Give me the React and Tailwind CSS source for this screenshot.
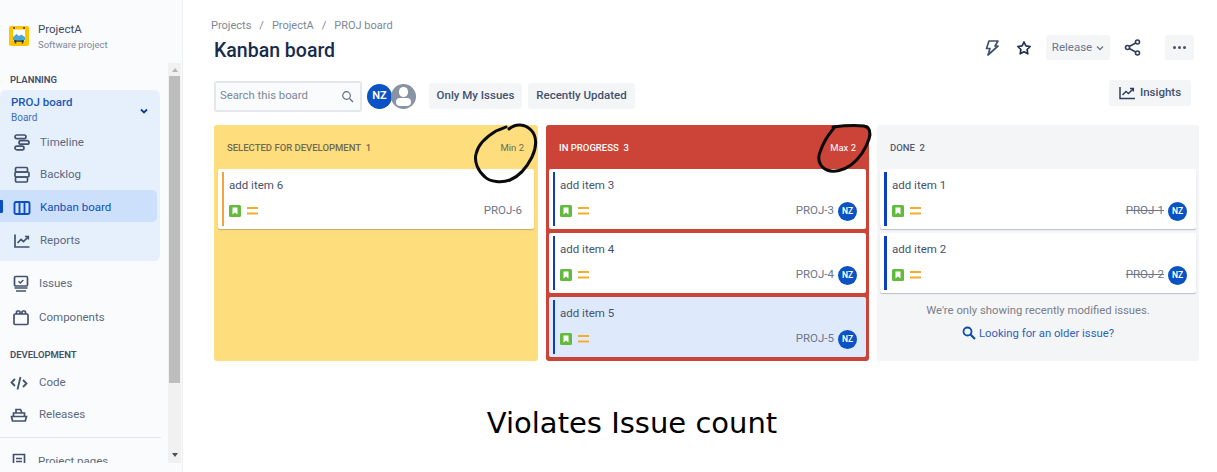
import React from "react";

const font = { fontFamily: 'Roboto, sans-serif' };

function NavIcon({ name, className = "text-[#42526e]" }) {
  const p = { width: 18, height: 18, viewBox: "0 0 18 18", fill: "none", stroke: "currentColor", strokeWidth: 1.7, className };
  if (name === "timeline") return (
    <svg {...p}><rect x="2" y="1" width="11" height="3.6" rx="1.8" /><rect x="6" y="6.6" width="10" height="3.6" rx="1.8" /><rect x="2" y="12.2" width="9" height="3.6" rx="1.8" /></svg>
  );
  if (name === "backlog") return (
    <svg {...p}><rect x="2.5" y="1.5" width="12" height="4.5" rx="1.2" /><rect x="2" y="6" width="14" height="5" rx="1.2" /><rect x="2.5" y="11" width="12" height="5" rx="1.2" /></svg>
  );
  if (name === "kanban") return (
    <svg {...p} strokeWidth={1.9}><rect x="1.5" y="3" width="15" height="12" rx="1.5" /><path d="M6.5 3v12M11.5 3v12" /></svg>
  );
  if (name === "reports") return (
    <svg {...p}><path d="M2 2.5V15h14.5" /><path d="M4.5 11l3.5-3.5 2.5 2L15 5" /><path d="M12 4.5h3.3v3" /></svg>
  );
  if (name === "issues") return (
    <svg {...p}><rect x="2.5" y="1.5" width="13" height="9.5" rx="1.2" /><path d="M6.5 6.2l1.8 1.7 3-3" strokeWidth="1.4" /><path d="M2.5 13h13M4 16h10" /></svg>
  );
  if (name === "components") return (
    <svg {...p}><rect x="2" y="5" width="14" height="10.5" rx="1.2" /><path d="M4.5 5V3a1 1 0 0 1 1-1h1.5a1 1 0 0 1 1 1v2M10 5V3a1 1 0 0 1 1-1h1.5a1 1 0 0 1 1 1v2" /></svg>
  );
  if (name === "code") return (
    <svg {...p} strokeWidth={1.8}><path d="M5 5L1.5 8.5 5 12M13 6l3.5 3.5L13 13M10.5 3l-3 12.5" /></svg>
  );
  if (name === "releases") return (
    <svg {...p}><path d="M1.5 10.5h15l-1.2 4.5H2.5z" /><path d="M3.5 10.5V7h11v3.5M6 7V3.5h4.5L12 7" /></svg>
  );
  return (
    <svg {...p}><path d="M3.5 1.5h11v15h-11z" /><path d="M6 5.5h6M6 8.5h6M6 11.5h3.5" /></svg>
  );
}

function NavRow({ icon, label, h = "h-8", pl = "pl-[13px]", gap = "gap-[9px]", active }) {
  return (
    <div className={`${h} ${pl} ${gap} flex items-center text-[11.5px] ${active ? "text-[#0b4fc0]" : "text-[#5c6a80]"}`}>
      <NavIcon name={icon} className={active ? "text-[#0b4fc0]" : "text-[#42526e]"} />
      <span>{label}</span>
    </div>
  );
}

function Sidebar() {
  return (
    <aside className="w-[183px] h-[472px] shrink-0 bg-[#fafbfd] border-r border-[#eceef1] flex flex-col" style={font}>
      <div className="h-[63px] shrink-0 pt-[21px] pl-[9px] flex gap-[9px]">
        <svg width="20" height="20" viewBox="0 0 20 20" className="mt-[5px]">
          <rect width="20" height="20" rx="2" fill="#ffc400" />
          <rect x="4" y="3.5" width="12" height="11" fill="#fff" />
          <path d="M4 11l3.5-3 2.5 2 2-1.5 4 2.5v3H4z" fill="#4aa8d8" />
          <path d="M5 15h10M6.5 14v3.5M13.5 14v3.5" stroke="#253858" strokeWidth="1.5" />
          <path d="M5 1v2M15 1v2" stroke="#253858" strokeWidth="1.4" />
        </svg>
        <div className="flex flex-col">
          <span className="text-[11.5px] leading-[17px] text-[#3a4a63]">ProjectA</span>
          <span className="text-[9.5px] leading-[14px] text-[#7a869a]">Software project</span>
        </div>
      </div>
      <div className="flex flex-1 min-h-0 pb-[9px]">
        <div className="w-[168px] shrink-0 overflow-hidden">
          <div className="pl-[10px] mt-[10px] h-[14px] leading-[14px] text-[9.5px] font-semibold text-[#445068]">PLANNING</div>
          <div className="mt-[3px] w-[160px] h-[171px] bg-[#e6f0fd] rounded-r-[6px] rounded-tl-[6px] flex flex-col">
            <div className="h-[36px] pl-[11px] pr-[11px] flex items-center justify-between shrink-0 pt-[2px]">
              <div className="flex flex-col">
                <span className="text-[11.5px] leading-[17px] font-medium text-[#1a56b8]">PROJ board</span>
                <span className="text-[10px] leading-[14px] text-[#3b6fc4]">Board</span>
              </div>
              <svg width="10" height="10" viewBox="0 0 10 10" fill="none" stroke="#0b3f94" strokeWidth="1.8" className="mt-[3px]"><path d="M2 3.5l3 3 3-3" /></svg>
            </div>
            <NavRow icon="timeline" label="Timeline" h="h-[32px] shrink-0 pt-[2px]" />
            <NavRow icon="backlog" label="Backlog" h="h-[32px] shrink-0 pt-[2px]" />
            <div className="relative w-[157px] h-[32px] bg-[#cde0fb] rounded-r-[5px] shrink-0">
              <div className="absolute left-0 top-[10px] w-[3px] h-[13px] bg-[#0b4fc0] rounded-r-[1px]" />
              <NavRow icon="kanban" label="Kanban board" h="h-[32px] pt-[3px]" active />
            </div>
            <NavRow icon="reports" label="Reports" h="h-[36px] shrink-0 pt-[2px]" />
          </div>
          <div className="mt-[6px]">
            <NavRow icon="issues" label="Issues" h="h-[34px]" pl="pl-[12px]" gap="gap-[9px]" />
            <NavRow icon="components" label="Components" h="h-[34px]" pl="pl-[12px]" gap="gap-[9px]" />
          </div>
          <div className="pl-[10px] mt-[13px] h-[14px] leading-[14px] text-[9.5px] font-semibold text-[#445068]">DEVELOPMENT</div>
          <NavRow icon="code" label="Code" h="h-[32px] mt-[5px]" pl="pl-[10px]" gap="gap-[11px]" />
          <NavRow icon="releases" label="Releases" h="h-[32px]" pl="pl-[10px]" gap="gap-[11px]" />
          <div className="mt-[6px] w-[161px] border-t border-[#e4e7ec]" />
          <div className="mt-[14px]"><NavRow icon="pages" label="Project pages" h="h-[20px]" pl="pl-[10px]" gap="gap-[10px]" /></div>
        </div>
        <div className="w-[13px] shrink-0 bg-[#f1f1f1] flex flex-col items-center">
          <div className="h-[13px] flex items-center justify-center">
            <div className="w-0 h-0 border-x-[3.5px] border-x-transparent border-b-[4px] border-b-[#b5b5b5]" />
          </div>
          <div className="w-[11px] h-[307px] bg-[#bdbdbd]" />
          <div className="flex-1" />
          <div className="h-[16px] flex items-center justify-center">
            <div className="w-0 h-0 border-x-[3.5px] border-x-transparent border-t-[4px] border-t-[#505050]" />
          </div>
        </div>
      </div>
    </aside>
  );
}

function Story() {
  return (
    <svg width="12" height="12" viewBox="0 0 12 12">
      <rect width="12" height="12" rx="1.5" fill="#63ba3c" />
      <path d="M3.5 2.5h5v7L6 7.6 3.5 9.5z" fill="#fff" />
    </svg>
  );
}

function Medium() {
  return (
    <svg width="11" height="8" viewBox="0 0 11 8" className="ml-[6px]">
      <path d="M0 1h11M0 6.5h11" stroke="#f5ad2d" strokeWidth="2" />
    </svg>
  );
}

function Avatar({ size = "w-[19px] h-[19px] text-[8.5px]" }) {
  return <div className={`${size} rounded-full bg-[#0b52c4] text-white font-semibold flex items-center justify-center`}>NZ</div>;
}

function Card({ title, code, bar = "bg-[#0b3fbf]", barW = "w-[2px]", avatar = true, done, bg = "bg-white", h = "h-[60px]", shadow = "shadow-[0_1px_1px_rgba(9,30,66,0.25)]" }) {
  return (
    <div className={`${h} ${bg} ${shadow} rounded-[2px] flex py-[3px] pl-[4px] pr-[9px]`}>
      <div className={`${barW} h-full ${bar} shrink-0`} />
      <div className="flex-1 pl-[5px] flex flex-col">
        <div className="text-[11.5px] leading-[17px] text-[#45526b] mt-[5px]">{title}</div>
        <div className="flex items-center mt-auto mb-[5px] h-[20px]">
          <Story />
          <Medium />
          <div className="flex-1" />
          <span className={`text-[11.5px] text-[#6b778c] ${done ? "line-through" : ""}`}>{code}</span>
          {avatar ? <div className="ml-[4px]"><Avatar /></div> : <div className="w-[3px]" />}
        </div>
      </div>
    </div>
  );
}

function Board() {
  return (
    <div className="flex gap-[8px] mt-[13px] w-[986px] h-[236px]">
      <section className="relative w-[324px] bg-[#fede7c] rounded-[3px] px-[4px]">
        <header className="h-[44px] pt-[2px] flex items-center justify-between pl-[9px] pr-[10px] text-[9.5px] text-[#6e6a55]">
          <span className="font-medium">SELECTED FOR DEVELOPMENT&nbsp; 1</span>
          <span className="mt-[1px]">Min 2</span>
        </header>
        <Card title="add item 6" code="PROJ-6" bar="bg-[#f0a33f]" avatar={false} />
        <svg className="absolute left-[258px] -top-[3px]" width="68" height="64" viewBox="0 0 68 64" fill="none">
          <path d="M37 7C44 1 53 2 59 8c6 6 6 17 1 27-5 10-12 19-22 23-8 3-20 2-25-3C6 49 2 40 4 32 6 22 14 15 24 9c4-2 8-3 10-4" stroke="#0a0a0a" strokeWidth="3" strokeLinecap="round" />
        </svg>
      </section>
      <section className="relative w-[323px] bg-[#cc4337] rounded-[3px] px-[3px]">
        <header className="h-[44px] pt-[2px] flex items-center justify-between pl-[10px] pr-[10px] text-[9.5px] text-white">
          <span className="font-medium">IN PROGRESS&nbsp; 3</span>
          <span className="mt-[1px]">Max 2</span>
        </header>
        <div className="flex flex-col gap-[4px]">
          <Card title="add item 3" code="PROJ-3" shadow="" />
          <Card title="add item 4" code="PROJ-4" shadow="" />
          <Card title="add item 5" code="PROJ-5" bg="bg-[#deeafc]" shadow="" />
        </div>
        <svg className="absolute left-[268px] -top-[3px]" width="62" height="54" viewBox="0 0 62 54" fill="none">
          <path d="M19 5c8-1 21-2 31-1 6 1 7 7 5 13-3 9-9 19-18 26-7 5-17 8-24 5C6 45 3 38 6 30 9 21 14 13 20 6" stroke="#0a0a0a" strokeWidth="3" strokeLinecap="round" />
        </svg>
      </section>
      <section className="w-[322px] bg-[#f4f5f7] rounded-[3px] px-[3px]">
        <header className="h-[44px] pt-[2px] flex items-center pl-[10px] text-[9.5px] text-[#505c72]">
          <span className="font-medium">DONE&nbsp; 2</span>
        </header>
        <div className="flex flex-col gap-[4px]">
          <Card title="add item 1" code="PROJ-1" done barW="w-[3px]" />
          <Card title="add item 2" code="PROJ-2" done barW="w-[3px]" />
        </div>
        <div className="text-center mt-[10px] text-[11.3px] leading-[16px] text-[#7a7f88]">We're only showing recently modified issues.</div>
        <div className="flex items-center justify-center gap-[3px] mt-[7px] text-[11.3px] leading-[16px] text-[#2c62bd]">
          <svg width="14" height="14" viewBox="0 0 14 14" fill="none" stroke="#0b4fa8" strokeWidth="1.8" className="-mt-[2px]">
            <circle cx="5.5" cy="5.5" r="4" /><path d="M8.5 8.5l4.5 4.5" strokeWidth="2.2" />
          </svg>
          <span>Looking for an older issue?</span>
        </div>
      </section>
    </div>
  );
}

export default function App() {
  return (
    <div className="w-[1217px] h-[472px] overflow-hidden bg-white flex" style={font}>
      <Sidebar />
      <main className="flex-1 min-w-0 flex flex-col pl-[31px]">
        <div className="pt-[17px] h-[37px] -ml-[3px] text-[11px] leading-[17px] text-[#7d8899] flex gap-[8px]">
          <span>Projects</span><span>/</span><span>ProjectA</span><span>/</span><span>PROJ board</span>
        </div>
        <div className="flex items-start justify-between h-[28px] w-[980px]">
          <h1 className="text-[19.5px] leading-[28px] font-medium text-[#172b4d]">Kanban board</h1>
          <div className="flex items-center -mt-[2px] text-[#42526e]">
            <svg width="16" height="18" viewBox="0 0 16 18" fill="none" stroke="#42526e" strokeWidth="1.7" strokeLinejoin="round">
              <path d="M5 2h9l-3 5h3L4 16l2-6.5H2.5z" />
            </svg>
            <svg width="16" height="16" viewBox="0 0 16 16" fill="none" stroke="#1f3150" strokeWidth="1.7" strokeLinejoin="round" className="ml-[16px]">
              <path d="M8 2l1.9 3.9 4.3.6-3.1 3 .7 4.3L8 11.8 4.2 13.8l.7-4.3-3.1-3 4.3-.6z" />
            </svg>
            <div className="ml-[14px] w-[64px] h-[25px] bg-[#f4f5f7] rounded-[3px] flex items-center justify-center gap-[4px] text-[11.5px] text-[#6b778c]">
              <span>Release</span>
              <svg width="8" height="8" viewBox="0 0 8 8" fill="none" stroke="#6b778c" strokeWidth="1.3"><path d="M1 2.5l3 3 3-3" /></svg>
            </div>
            <svg width="17" height="17" viewBox="0 0 17 17" fill="none" stroke="#2d3f5e" strokeWidth="1.6" className="ml-[14px]">
              <circle cx="3.5" cy="8.5" r="2" /><circle cx="13.5" cy="3" r="2" /><circle cx="13.5" cy="14" r="2" /><path d="M5.3 7.5l6.4-3.5M5.3 9.5l6.4 3.5" />
            </svg>
            <div className="ml-[24px] w-[29px] h-[25px] bg-[#f4f5f7] rounded-[3px] flex items-center justify-center gap-[2px]">
              <span className="w-[3px] h-[3px] rounded-full bg-[#42526e]" />
              <span className="w-[3px] h-[3px] rounded-full bg-[#42526e]" />
              <span className="w-[3px] h-[3px] rounded-full bg-[#42526e]" />
            </div>
          </div>
        </div>
        <div className="flex items-center h-[32px] w-[977px] mt-[15px]">
          <div className="w-[148px] h-[31px] bg-[#fafbfc] border-2 border-[#e4e7ec] rounded-[3px] flex items-center justify-between pl-[4px] pr-[6px] text-[11.3px] text-[#7a869a]">
            <span>Search this board</span>
            <svg width="13" height="13" viewBox="0 0 13 13" fill="none" stroke="#5e6c84" strokeWidth="1.2"><circle cx="5.5" cy="5.5" r="3.8" /><path d="M8.5 8.5L12 12" /></svg>
          </div>
          <div className="ml-[5px]"><Avatar size="w-[25px] h-[25px] text-[11px]" /></div>
          <div className="w-[25px] h-[25px] rounded-full bg-[#8993a4] relative -ml-[1px] overflow-hidden">
            <div className="absolute left-[8px] top-[3px] w-[9px] h-[10px] rounded-full bg-white" />
            <div className="absolute left-[5px] top-[14px] w-[15px] h-[8px] rounded-[4px] bg-white" />
          </div>
          <div className="ml-[13px] w-[93px] h-[26px] bg-[#f4f5f7] rounded-[3px] flex items-center justify-center text-[11.5px] font-medium text-[#42526e]">Only My Issues</div>
          <div className="ml-[6px] w-[107px] h-[26px] bg-[#f4f5f7] rounded-[3px] flex items-center justify-center text-[11.5px] font-medium text-[#42526e]">Recently Updated</div>
          <div className="flex-1" />
          <div className="w-[82px] h-[26px] -mt-[6px] bg-[#f4f5f7] rounded-[3px] flex items-center justify-center gap-[5px] text-[11.5px] font-medium text-[#42526e]">
            <svg width="16" height="14" viewBox="0 0 16 14" fill="none" stroke="#2d3f5e" strokeWidth="1.5"><path d="M1 1v11.5h15" /><path d="M3.5 9L7 5.5l2.5 2L14 3" /><path d="M11 2.5h3.3v3" /></svg>
            <span>Insights</span>
          </div>
        </div>
        <Board />
        <div className="w-[836px] text-center mt-[42px] leading-[40px] text-black" style={{ fontFamily: '"DejaVu Sans", sans-serif' }}>
          <span className="text-[29px]">Violates Issue count</span>
        </div>
      </main>
    </div>
  );
}
